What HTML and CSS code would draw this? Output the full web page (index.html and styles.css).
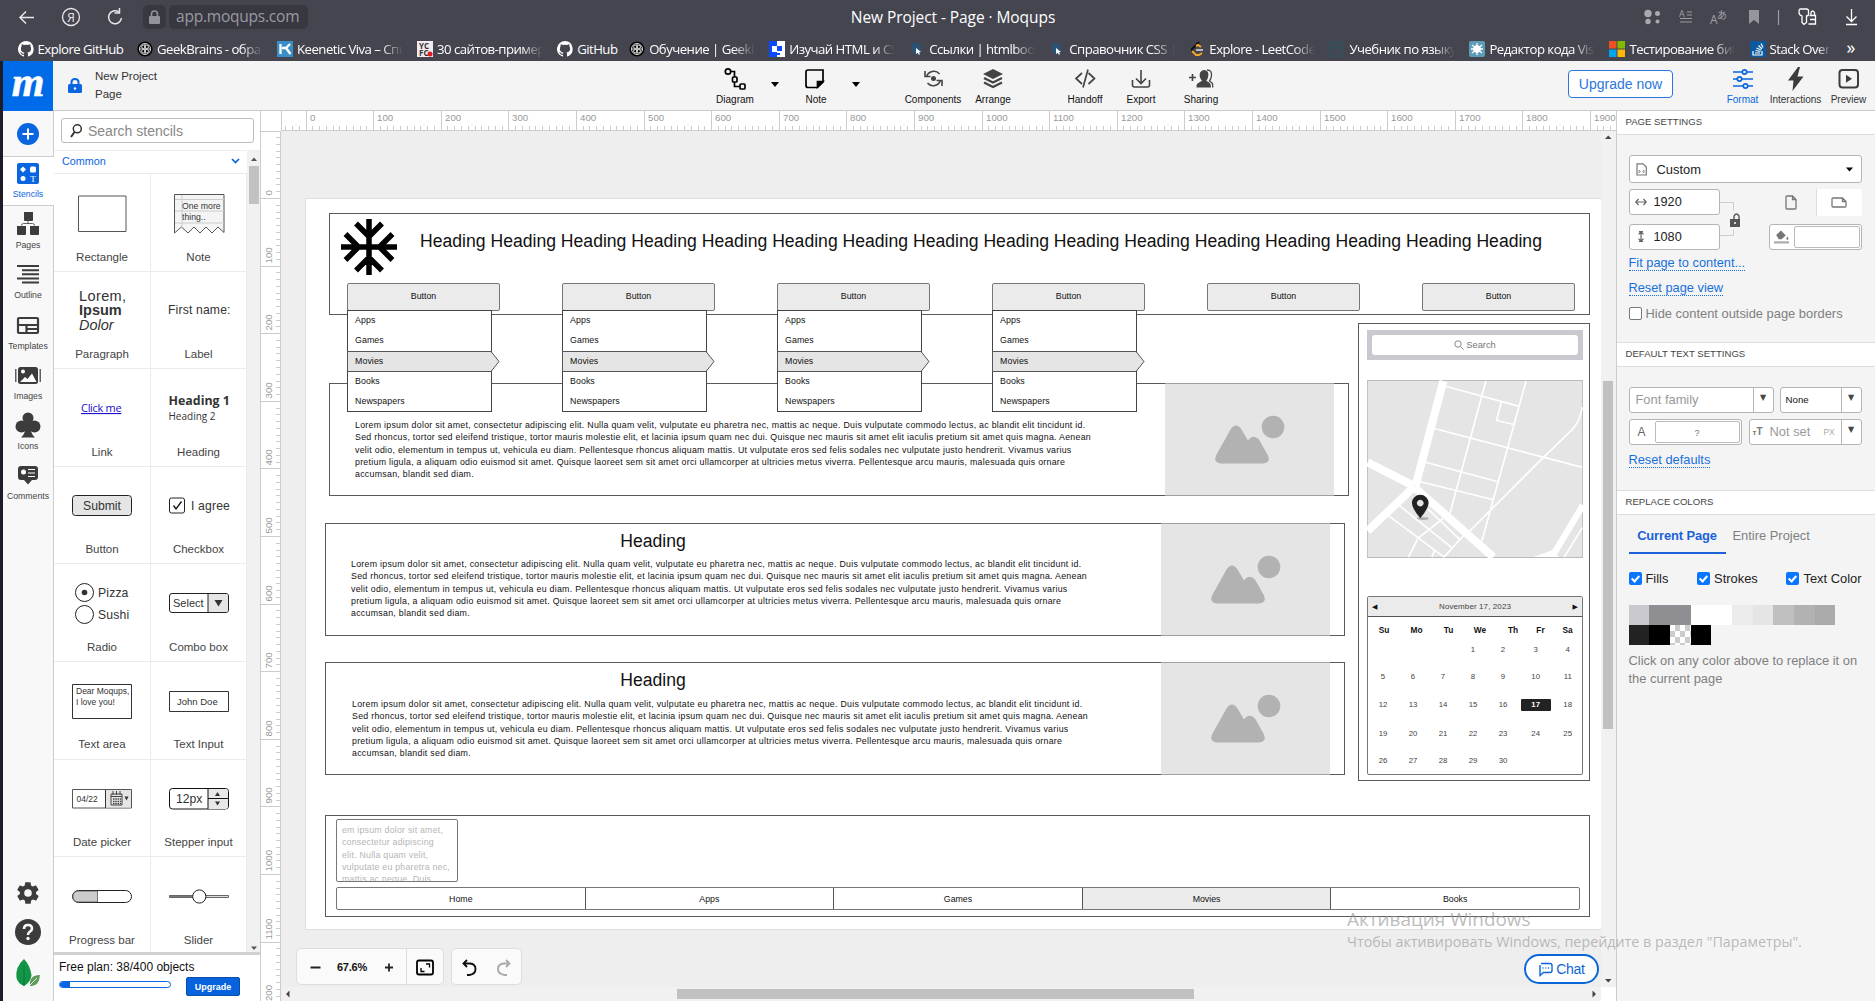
FILE: index.html
```html
<!DOCTYPE html>
<html lang="en">
<head>
<meta charset="utf-8">
<title>New Project - Page · Moqups</title>
<link rel="stylesheet" href="styles.css">
</head>
<body>
<svg class="defs" width="0" height="0">
  <symbol id="gh" viewBox="0 0 16 16"><path fill="#fff" d="M8 0a8 8 0 0 0-2.5 15.6c.4.1.5-.2.5-.4v-1.500c-2.200.500-2.700-1-2.700-1-.4-.9-.9-1.200-.9-1.200-.7-.5.1-.5.1-.5.8.1 1.200.8 1.200.8.7 1.300 1.900.9 2.300.7.1-.5.3-.9.5-1.100-1.800-.2-3.600-.9-3.600-4 0-.9.300-1.600.8-2.100-.1-.2-.4-1 .1-2.100 0 0 .7-.2 2.200.8a7.500 7.500 0 0 1 4 0c1.500-1 2.200-.8 2.200-.8.4 1.100.2 1.900.1 2.100.5.6.8 1.300.8 2.100 0 3.100-1.900 3.700-3.700 3.900.3.300.6.8.6 1.500v2.200c0 .2.100.5.6.4A8 8 0 0 0 8 0z"/></symbol>
  <symbol id="gb" viewBox="0 0 16 16"><circle cx="8" cy="8" r="7.600" fill="#000"/><g fill="none" stroke="#ddd" stroke-width="1"><circle cx="8" cy="8" r="5.500"/><circle cx="6.300" cy="5.800" r="1.700"/><circle cx="9.800" cy="5.800" r="1.700"/><circle cx="6.300" cy="10.200" r="1.700"/><circle cx="9.800" cy="10.200" r="1.700"/><path d="M8 3v10M3 8h10"/></g></symbol>
  <symbol id="hb" viewBox="0 0 16 16"><path fill="#22577f" d="M3 2h3l2-1 1 2 3 1v8l-4 2-5-3z" opacity=".75"/><path fill="#fff" d="M7 7l5 4-2 .3 1 2-1.200.5-1-2L7 13z"/></symbol>
  <symbol id="pic" viewBox="0 0 169 112"><path d="M0 0h169v112H0z" fill="#e5e5e5"/><g fill="#b2b2b2"><circle cx="108" cy="43.500" r="11.300"/><path d="M51 72 65.500 46Q71 38 76.500 46L83 57Q88 50 94 56L103 72Q106 79.500 98 80H56Q48 79.500 51 72z"/></g></symbol>
</svg>

<header class="chrome">
  <div class="chrome-top">
    <svg class="nav" width="130" height="34" viewBox="0 0 130 34" fill="none" stroke="#e8e8ea" stroke-width="1.500"><path d="M34 17.500H20M26 11.500l-6 6 6 6"/><circle cx="71" cy="17" r="8.500" stroke-width="1.300"/><path d="M121.500 18a6.500 6.500 0 1 1-3-6.300M119.500 8v5h-5"/><text x="71" y="21.500" text-anchor="middle" class="ya">Я</text></svg>
    <span class="lock"><svg width="11" height="14" viewBox="0 0 11 14"><rect y="6" width="11" height="8" rx="1" fill="#92929a"/><path d="M2.500 7V4a3 3 0 0 1 6 0v3" fill="none" stroke="#92929a" stroke-width="1.600"/></svg></span>
    <span class="url">app.moqups.com</span>
    <span class="win-title">New Project - Page · Moqups</span>
    <svg class="chrome-icons" width="235" height="34" viewBox="1640 0 235 34"><g fill="#a9a9b0"><circle cx="1648" cy="13.500" r="3.700"/><circle cx="1657.500" cy="13.500" r="2.500"/><circle cx="1648" cy="21.500" r="2.700"/><circle cx="1657.500" cy="21.500" r="2"/><path d="M1749 10h10v14l-5-4-5 4z" opacity=".8"/></g><g stroke="#9b9ba2" stroke-width="1.200"><path d="M1687 12h5M1687 15h5M1680 18.500h12M1680 22h12M1778.500 10v15"/></g><g fill="#a0a0a7"><text x="1679" y="16.500" class="t9">A</text><text x="1710" y="24" class="t12">A</text><text x="1717" y="19" class="t10">あ</text></g><g fill="none" stroke="#fff" stroke-width="1.300"><path d="M1800.500 9h6q2 0 2 2v3q0 2-2 2v6.500l-2.500 2-2-2V16q-3-1-3-3.500V11q0-2 1.500-2z"/><path d="M1809.500 15.500h6v8.500h-7M1811 15v-2.500q1.500-3 3.500 0V15M1810 19.500h5.500"/><path d="M1851.500 9v12M1846.500 16.500l5 5 5-5M1846 24.500h11"/></g></svg>
  </div>
  <nav class="bookmarks">
    <a class="w119"><svg><use href="#gh"/></svg><span>Explore GitHub</span></a>
    <a><svg><use href="#gb"/></svg><span>GeekBrains - образование</span></a>
    <a><svg viewBox="0 0 16 16"><path fill="#3a8ec8" d="M0 0h16v16H0z"/><path d="M3.500 3v10M13 3 9 7H5h4l4.500 6" fill="none" stroke="#fff" stroke-width="2.300"/></svg><span>Keenetic Viva – Список</span></a>
    <a><svg viewBox="0 0 16 16"><path fill="#f4e9ec" d="M0 0h16v16H0z"/><text x="2" y="7.500" class="fav">YC</text><text x="2" y="14.800" class="fav">FC</text><circle cx="13" cy="13" r="2.500" fill="#e02020"/></svg><span>30 сайтов-примеров</span></a>
    <a class="w73"><svg><use href="#gh"/></svg><span>GitHub</span></a>
    <a><svg><use href="#gb"/></svg><span>Обучение | GeekBrains</span></a>
    <a><svg viewBox="0 0 16 16"><path fill="#0b4bff" d="M0 0h8v16H0z"/><path fill="#fff" d="M8 0h8v16H8zM3 5h5v6H3z"/><path fill="#0b4bff" d="M8 5h5v5H8zM8 12h3v2H8z"/></svg><span>Изучай HTML и CSS</span></a>
    <a><svg><use href="#hb"/></svg><span>Ссылки | htmlbook.ru</span></a>
    <a><svg><use href="#hb"/></svg><span>Справочник CSS | htm</span></a>
    <a><svg viewBox="0 0 16 16" fill="none" stroke-width="2"><path stroke="#111" d="M10 1 3 8v3"/><path stroke="#f5a623" d="M3 10l4 4h3l3-2M7 5l2-1 3 2"/><path stroke="#bbb" d="M7 9h7"/></svg><span>Explore - LeetCode</span></a>
    <a><svg viewBox="0 0 16 16"><path fill="none" stroke="#34505f" stroke-width="1.500" d="M1 1h13v14H1zM4 13V4l3.500 4L11 4v9"/></svg><span>Учебник по языку C</span></a>
    <a><svg viewBox="0 0 16 16"><rect width="16" height="16" rx="2" fill="#5d9cb8"/><path stroke="#fff" stroke-width="1.300" d="M8 2v12M3 4l10 8M13 4 3 12M2 8h12"/><circle cx="8" cy="8" r="3.800" fill="#fff"/></svg><span>Редактор кода Visual</span></a>
    <a><svg viewBox="0 0 16 16"><path fill="#f25022" d="M0 0h7.500v7.500H0z"/><path fill="#7fba00" d="M8.500 0H16v7.500H8.500z"/><path fill="#00a4ef" d="M0 8.500h7.500V16H0z"/><path fill="#ffb900" d="M8.500 8.500H16V16H8.500z"/></svg><span>Тестирование библио</span></a>
    <a class="last"><svg viewBox="0 0 16 16"><path fill="#0c5a9e" d="M0 0h16v16H0z"/><path d="M3 10v4h9v-4M5 12h5M5.500 9.500l5 1M6.500 7l4.500 2M8.500 4.500l3.500 3.500M11 2.500l2 4" fill="none" stroke="#fff" stroke-width="1.200"/></svg><span>Stack Overflow</span></a>
    <b>»</b>
  </nav>
</header>

<div class="app">
  <div class="topbar">
    <div class="logo"><svg width="50" height="50" viewBox="0 0 50 50"><text x="25" y="34.500" text-anchor="middle">m</text></svg></div>
    <svg class="plock" width="14" height="15" viewBox="0 0 14 15"><rect y="6" width="14" height="9" rx="1.500" fill="#0a66e0"/><path d="M3.500 7V4a3.500 3 0 0 1 7 0v3" fill="none" stroke="#0a66e0" stroke-width="2"/><circle cx="7" cy="10.500" r="1.200" fill="#fff"/></svg>
    <div class="names"><span>New Project</span><span>Page</span></div>
    <div class="tools">
      <svg width="560" height="49" viewBox="700 61 560 49" fill="none" stroke="#444" stroke-width="1.600"><g stroke="#000" stroke-width="1.700"><circle cx="728" cy="71.500" r="2.700"/><rect x="732.500" y="77" width="4.500" height="5" rx="1"/><rect x="740" y="84" width="5" height="5" rx="1"/><path d="M731 71.500h3.500V77M734.500 82v4.500h5"/><path d="M808 70h15v12l-5.500 5.500H808a2 2 0 0 1-2-2V72a2 2 0 0 1 2-2z"/><path d="M817.500 87v-5.500h5.500z" fill="#000"/></g><path d="M771 82h8l-4 5zM852 82h8l-4 5z" fill="#000" stroke="none"/>
      <circle cx="933.500" cy="78.500" r="2.500" fill="#444" stroke="none"/><path d="M926.500 77a7.500 7.500 0 0 1 13-3M940.500 80a7.500 7.500 0 0 1-13 3M925 71v5.500h5.500M942 86v-5.500h-5.500"/><path d="M993 69l10 5-10 5-10-5z" fill="#444" stroke="none"/><path d="M984 78l9 4.500 9-4.500M984 82.500l9 4.500 9-4.500" stroke-width="2.200"/><path d="M1082 73l-6 5.500 6 5.500M1088.500 73l6 5.500-6 5.500M1088 69.500l-5 18" stroke-width="1.700"/><path d="M1141 70v13M1136 78.500l5 5 5-5M1132.500 80v5q0 2 2 2h13q2 0 2-2v-5"/><g fill="#444" stroke="none"><path d="M1196.500 87.500v-2q0-2 3-3.300l2.500-1.400q-3.300-4-2-8 1.500-3 4.300-2.800 5.500 1 3.800 7-.6 2.600-1.800 3.800l3.200 1.900q1.500 1 1.500 4.800z"/></g><path d="M1207 70q5 0 4.500 5.500-.5 3.500-2 5.500l2.500 2q.8 1 .8 4.500" stroke-width="1.300"/><path d="M1189 77.500h7M1192.500 74v7" stroke-width="1.700"/></svg>
      <span class="l1">Diagram</span><span class="l2">Note</span><span class="l3">Components</span><span class="l4">Arrange</span><span class="l5">Handoff</span><span class="l6">Export</span><span class="l7">Sharing</span>
    </div>
    <button class="upgrade-now">Upgrade now</button>
    <div class="views">
      <div class="v blue"><svg viewBox="0 0 22 24" fill="none" stroke="#0a66e0" stroke-width="1.700"><path d="M1 5h9M15 5h6M1 12h4M10 12h11M1 19h10M16 19h5"/><circle cx="12.500" cy="5" r="2.200"/><circle cx="7.500" cy="12" r="2.200"/><circle cx="13.500" cy="19" r="2.200"/></svg>Format</div>
      <div class="v"><svg viewBox="0 0 22 24"><path d="M13 0 3 13.500h5.500L7.500 24 18.500 9.500h-6L15 0z" fill="#3c3c3c"/></svg>Interactions</div>
      <div class="v"><svg viewBox="0 0 22 24"><rect x="1.500" y="3" width="18.500" height="17.500" rx="3" fill="none" stroke="#3c3c3c" stroke-width="2"/><path d="M8 7.800v8l6-4z" fill="#3c3c3c"/></svg>Preview</div>
    </div>
  </div>

  <div class="body">
    <aside class="rail">
      <div class="add"><svg width="22" height="22" viewBox="0 0 22 22"><circle cx="11" cy="11" r="11" fill="#0a66e0"/><path d="M11 5.500v11M5.500 11h11" stroke="#fff" stroke-width="2"/></svg></div>
      <div class="ri on"><svg viewBox="0 0 26 26"><rect x="2" y="2" width="22" height="21" rx="2" fill="#0a66e0"/><g fill="#fff"><path d="M8 5.500l3 3-3 3-3-3z"/><rect x="15" y="5.500" width="6" height="6" rx="1.500"/><circle cx="8" cy="17.500" r="2.500"/></g><text x="18" y="21" text-anchor="middle">T</text></svg>Stencils</div>
      <div class="ri"><svg viewBox="0 0 26 26" fill="#3c3c3c"><path d="M9 1h9v8q0 1-1 1h-7q-1 0-1-1zM2 15h9v8q0 1-1 1H3q-1 0-1-1zM15 15h9v8q0 1-1 1h-7q-1 0-1-1z"/><path d="M6.500 14.500q0-2 2-2h9q2 0 2 2M13 10v3" fill="none" stroke="#3c3c3c" stroke-width=".8"/></svg>Pages</div>
      <div class="ri"><svg viewBox="0 0 26 26" stroke="#3c3c3c" stroke-width="2"><path d="M2 5h22M7 9.200h17M7 13.300h17M2 17.500h22M7 21.500h17"/></svg>Outline</div>
      <div class="ri"><svg viewBox="0 0 26 26" fill="none" stroke="#3c3c3c" stroke-width="2.200"><rect x="3" y="6" width="20" height="15" rx="1"/><path d="M3 13h20M11.500 13v8M12 17h11"/></svg>Templates</div>
      <div class="ri"><svg viewBox="0 0 26 26" fill="#3c3c3c"><rect x="3" y="5" width="20" height="17" rx="2.500"/><path d="M.8 7v13M25.200 7v13" stroke="#3c3c3c" stroke-width="1.200"/><circle cx="8" cy="9.500" r="2" fill="#fff"/><path d="M5 20l5-5 2.500 2L17 11.500 21.500 20z" fill="#fff"/></svg>Images</div>
      <div class="ri"><svg viewBox="0 0 26 26" fill="#3c3c3c"><circle cx="13" cy="6" r="5.500"/><circle cx="6.500" cy="14.500" r="6"/><circle cx="19.500" cy="14.500" r="6"/><path d="M13 8v12M11 10h4q0 12 5 15.500H6q5-3.500 5-15.500z"/></svg>Icons</div>
      <div class="ri"><svg viewBox="0 0 26 26"><path d="M6 4h14q3 0 3 3v8q0 3-3 3h-3l-4 4.500L9 18H6q-3 0-3-3V7q0-3 3-3z" fill="#3c3c3c"/><circle cx="8.500" cy="10" r="2.500" fill="#fff"/><path d="M13 7.500h7M13 11h7M13 14.500h7" stroke="#fff" stroke-width="1.200"/></svg>Comments</div>
      <div class="rail-end">
        <svg width="26" height="26" viewBox="0 0 24 24"><path fill="#3c3c3c" d="M19.400 13a7.500 7.500 0 0 0 0-2l2.100-1.600a.5.5 0 0 0 .1-.6l-2-3.500a.5.5 0 0 0-.6-.2l-2.500 1a7.300 7.300 0 0 0-1.700-1L14.400 2.400a.5.500 0 0 0-.5-.4h-4a.5.500 0 0 0-.5.400l-.4 2.700a7.700 7.700 0 0 0-1.700 1l-2.500-1a.5.500 0 0 0-.6.200l-2 3.500a.5.500 0 0 0 .1.600L4.500 11a8 8 0 0 0 0 2l-2.100 1.600a.5.500 0 0 0-.1.600l2 3.500c.1.200.4.300.6.200l2.500-1a7.300 7.300 0 0 0 1.700 1l.4 2.700c0 .2.200.4.500.4h4c.2 0 .5-.2.500-.4l.4-2.700a7.700 7.700 0 0 0 1.700-1l2.500 1c.2.100.5 0 .6-.2l2-3.500a.5.500 0 0 0-.1-.6zM12 15.500a3.500 3.500 0 1 1 0-7 3.500 3.500 0 0 1 0 7z"/></svg>
        <svg width="26" height="26" viewBox="0 0 26 26"><circle cx="13" cy="13" r="13" fill="#3c3c3c"/><path d="M9 10q0-4 4-4t4 3.500q0 2-2 3-2 1.200-2 3.500" fill="none" stroke="#f8f8f8" stroke-width="2.600"/><circle cx="13" cy="19.500" r="1.700" fill="#f8f8f8"/></svg>
        <svg width="26" height="30" viewBox="0 0 26 30"><path d="M9 1Q0 9 1.500 20q1 5 7.500 8 7-4 7.500-11Q15 7 9 1z" fill="#149447"/><path d="M9 8v20" stroke="#0b7a38"/><path d="M25 17q-11 0-10 11 9 1 10-11z" fill="#5a9a5a"/><path d="M14 28l8-8" stroke="#fff" stroke-width=".8"/></svg>
      </div>
    </aside>

    <section class="stencils">
      <div class="search"><svg width="12" height="14" viewBox="0 0 12 14" fill="none" stroke="#333"><circle cx="7.300" cy="4.800" r="4" stroke-width="1.500"/><path d="M4.500 8 1 13" stroke-width="2"/></svg>Search stencils</div>
      <div class="list">
        <div class="list-main">
          <div class="common">Common<svg width="9" height="6" viewBox="0 0 9 6"><path d="M1 1l3.500 3.500L8 1" fill="none" stroke="#0a66e0" stroke-width="1.700"/></svg></div>
          <div class="cells">
            <div class="cell"><svg><path d="M24.500 22h47.500v35.500H24.500z" fill="#fff" stroke="#555"/></svg>Rectangle</div>
            <div class="cell"><svg><path d="M23.500 20.500h49.500v38l-6-5.500-6 6-6-6-6 6-6-6-6 6-6.500-6-7 6z" fill="#f4f4f4" stroke="#555"/><path d="M24 25.500h49M24 37h49M24 49h49M31 21v32" stroke="#ccc"/><text x="31" y="35" class="s9">One more</text><text x="31" y="45.500" class="s9">thing..</text></svg>Note</div>
            <div class="cell"><svg><text x="25" y="28.500" class="s14">Lorem,</text><text x="25" y="43" class="s14 bold">Ipsum</text><text x="25" y="57.500" class="s14 it">Dolor</text></svg>Paragraph</div>
            <div class="cell"><svg><text x="17" y="41.500" class="s12 wide">First name:</text></svg>Label</div>
            <div class="cell"><svg><text x="27" y="43" class="os link">Click me</text></svg>Link</div>
            <div class="cell"><svg><text x="17.500" y="35.500" class="os h1">Heading 1</text><text x="17.500" y="51" class="os h2">Heading 2</text></svg>Heading</div>
            <div class="cell"><svg><rect x="18.500" y="28.500" width="59" height="20" rx="3" fill="#e5e5e5" stroke="#222"/><text x="48" y="42.500" text-anchor="middle" class="s12">Submit</text></svg>Button</div>
            <div class="cell"><svg><rect x="18.500" y="31" width="15" height="15" rx="2" fill="#fff" stroke="#222"/><path d="M22.500 38.500l2.500 3.500 5.500-7.500" fill="none" stroke="#111" stroke-width="1.300"/><text x="40" y="43" class="s12 wide">I agree</text></svg>Checkbox</div>
            <div class="cell"><svg><g fill="#fff" stroke="#222"><circle cx="30.500" cy="28.500" r="9"/><circle cx="30.500" cy="50.500" r="9"/></g><circle cx="30.500" cy="28.500" r="2.800" fill="#333"/><text x="44" y="33" class="s12 wide">Pizza</text><text x="44" y="55" class="s12 wide">Sushi</text></svg>Radio</div>
            <div class="cell"><svg><rect x="18.500" y="29.500" width="59" height="19" rx="2.500" fill="#fff" stroke="#222"/><path d="M57 30h18q2 0 2 2v14q0 2-2 2H57z" fill="#e5e5e5"/><path d="M57 30v19" stroke="#222"/><path d="M63.500 36h8l-4 6.500z" fill="#333"/><text x="22" y="43" class="s11">Select</text></svg>Combo box</div>
            <div class="cell"><svg><path d="M18.500 22.500h59v34h-59z" fill="#fff" stroke="#333"/><text x="22" y="32" class="s85">Dear Moqups,</text><text x="22" y="42.500" class="s85">I love you!</text></svg>Text area</div>
            <div class="cell"><svg><path d="M18.500 29.500h59v20h-59z" fill="#fff" stroke="#333"/><text x="26" y="42.500" class="s95">John Doe</text></svg>Text Input</div>
            <div class="cell"><svg><path d="M18.500 29.500h59v18.500h-59z" fill="#fff" stroke="#555"/><path d="M52 30h25v17.500H52z" fill="#e5e5e5"/><path d="M51.500 30v18" stroke="#333"/><path d="M57 34h11v11H57zM57 36.500h11M59 31v4M62.500 31v4M66 31v4" fill="none" stroke="#444"/><path d="M59 39h8M59 41.300h8M59 43.500h8" stroke="#444" stroke-dasharray="1.500 .8" stroke-width="1.300"/><path d="M70.500 36.500h4l-2 4z" fill="#333"/><text x="22.500" y="41.500" class="s85">04/22</text></svg>Date picker</div>
            <div class="cell"><svg><rect x="18.500" y="28.500" width="59" height="20.500" rx="3" fill="#fff" stroke="#111"/><path d="M57 29h17.500q2.500 0 2.500 3v14q0 3-2.500 3H57z" fill="#e8e8e8"/><path d="M57 29v20M57 38.500h20.500" stroke="#111"/><path d="M64 36h5l-2.500-4zM64 41.500h5l-2.500 4z" fill="#333"/><text x="25" y="42.500" class="s12">12px</text></svg>Stepper input</div>
            <div class="cell"><svg><rect x="18.500" y="33.500" width="59" height="12" rx="6" fill="#fff" stroke="#222"/><path d="M43.500 34H25q-6 0-6 5.500t6 5.500h18.500z" fill="#ccc" stroke="#444" stroke-width=".7"/></svg>Progress bar</div>
            <div class="cell"><svg><path d="M18.500 38.500h59v2h-59z" fill="#ddd" stroke="#444" stroke-width=".8"/><path d="M19 39.500h24" stroke="#777"/><circle cx="48.300" cy="39.500" r="6.600" fill="#fff" stroke="#222"/></svg>Slider</div>
          </div>
        </div>
        <div class="list-scroll"><svg width="14" height="802" viewBox="0 0 14 802"><path d="M4 10h6l-3-3.500zM4 795.500h6l-3 3.500z" fill="#555"/><path d="M2 15h10v38H2z" fill="#c1c1c1"/></svg></div>
      </div>
      <footer class="plan"><div class="plan-text">Free plan: 38/400 objects</div><div class="plan-row"><div class="meter"><i></i></div><button>Upgrade</button></div></footer>
    </section>

    <main class="work">
      <svg class="ruler-top" id="rt" width="1335" height="20"></svg>
      <svg class="ruler-left" id="rl" width="20" height="870"></svg>
      <div class="canvas">
        <div class="sheet">
          <div class="box" style="left:23px;top:14px;width:1261px;height:102px"></div>
          <svg class="ob flake" width="56" height="56" viewBox="0 0 56 56" fill="none" stroke="#000" stroke-width="5.500"><path d="M28 0v56M0 28h56M15 4.500l13 13 13-13M15 51.500l13-13 13 13M4.500 15l13 13-13 13M51.500 15l-13 13 13 13"/></svg>
          <div class="ob big">Heading Heading Heading Heading Heading Heading Heading Heading Heading Heading Heading Heading Heading Heading Heading Heading</div>
          <div class="box sec" style="left:23px;top:184px"><svg><use href="#pic"/></svg></div>
          <p class="ob lorem" style="left:49px;top:220px"></p>
          <div class="box sec" style="left:19px;top:324px"><svg><use href="#pic"/></svg><h2>Heading</h2></div>
          <p class="ob lorem" style="left:45px;top:359px"></p>
          <div class="box sec" style="left:19px;top:463px"><svg><use href="#pic"/></svg><h2>Heading</h2></div>
          <p class="ob lorem" style="left:46px;top:499px"></p>
          <div class="ob menubtn" style="left:41px"></div><div class="ob menubtn" style="left:256px"></div><div class="ob menubtn" style="left:471px"></div><div class="ob menubtn" style="left:686px"></div>
          <div class="ob menubtn solo" style="left:901px"></div><div class="ob menubtn solo" style="left:1116px"></div>

          <div class="box side"></div>
          <div class="ob find"><span><svg width="10" height="10" viewBox="0 0 10 10" fill="none" stroke="#888"><circle cx="4" cy="4" r="3.200"/><path d="M6.500 6.500 9.500 9.500"/></svg>Search</span></div>
          <svg class="ob map" width="216" height="178" viewBox="83 240 645 530"><path fill="#e5e5e5" stroke="#bbb" stroke-width="5" d="M83 240h645v530H83z"/><g fill="none" stroke="#fff" stroke-width="5"><path d="M318 258l220 60M438 242L330 640M558 242L426 720M484 305l-14 55 52 12M284 384l442 116M258 485l216 58M243 543l218 54M726 320Q718 365 695 388L600 480 388 692M178 613l158 127M148 645l165 123M265 625l95 90M313 650l-78 62-28 56M313 768l60-66M285 748l-8 20M726 680l-54 88"/><path stroke-width="24" d="M311 242L228 555M85 485l140 72M225 557L85 690M225 560L460 768"/><path stroke-width="19" d="M728 613L642 756"/><path d="M580 768l60-22 15 22z" fill="#fff" stroke="none"/></g><ellipse cx="250" cy="653" rx="18" ry="4" fill="#aaa"/><path fill="#222" fill-rule="evenodd" d="M242 652Q217 622 217 606A25 24 0 0 1 267 606Q267 622 242 652zM242 597a10 10 0 1 0 .1 0z"/></svg>
          <div class="ob cal"><div class="cal-h"><i>◀</i>November 17, 2023<i>▶</i></div>
            <div class="wk"><b>Su</b><b>Mo</b><b>Tu</b><b>We</b><b>Th</b><b>Fr</b><b>Sa</b></div>
            <div class="days" id="days"></div></div>

          <div class="box" style="left:19px;top:616px;width:1265px;height:102px"></div>
          <div class="ob area">em ipsum dolor sit amet,<br>consectetur adipiscing<br>elit. Nulla quam velit,<br>vulputate eu pharetra nec,<br>mattis ac neque. Duis</div>
          <div class="ob tabs5"><span>Home</span><span>Apps</span><span>Games</span><span class="cur">Movies</span><span>Books</span></div>
        </div>
        <div class="zoom"><div class="grp z1"><svg width="146" height="36" viewBox="0 0 146 36" fill="none" stroke="#222" stroke-width="1.800"><path d="M13.500 18.500h10M88 18.500h8M92 14.500v8"/><path d="M109.500 0v36" stroke="#ddd" stroke-width="1"/><rect x="120" y="11.500" width="16" height="14" rx="2" stroke="#000"/><path d="M124 19v3.500h3.500M129 15h3.500v3.500" stroke="#000" stroke-width="1.300"/></svg><span>67.6%</span></div><div class="grp"><svg width="69" height="36" viewBox="0 0 69 36" fill="none" stroke="#111" stroke-width="1.900"><path d="M15 11l-3.500 3.500L15 18M12 14.500h6q5.500 .5 5.500 5.500t-6 6H15"/><path stroke="#aaa" d="M54 11l3.500 3.500L54 18M57 14.500h-5q-6 .5-6 5.500t6.500 6H55"/></svg></div></div>
      </div>
      <div class="vs"><svg width="15" height="856" viewBox="0 1 15 856"><path d="M4 9h6.500l-3.200-3.500zM4 849h6.500l-3.200 3.500z" fill="#444"/><path d="M2 251h10v348H2z" fill="#c1c1c1"/></svg></div>
      <div class="hs"><svg width="1320" height="14" viewBox="281 0 1320 14"><path d="M289.500 3.500v7l-3.500-3.500zM1592.500 3.500v7l3.500-3.500z" fill="#444"/><path d="M677 2h517v10H677z" fill="#c1c1c1"/></svg></div>
      <div class="chat"><svg width="15" height="15" viewBox="0 0 15 15" fill="none" stroke="#0a66d8" stroke-width="1.400"><path d="M3 1.500h9q2 0 2 2v5q0 2-2 2H5.500L2 13.500V3"/><path d="M4.500 6h1M7.300 6h1M10 6h1"/></svg>Chat</div>
    </main>

    <aside class="props">
      <h3>PAGE SETTINGS</h3>
      <div class="pg p1">
        <div class="fld custom"><svg width="11" height="13" viewBox="0 0 11 13" fill="none" stroke="#777"><path d="M1 .8h6L10.300 4v8H1z" stroke-width="1.200"/><path d="M3 7v3l1.500-1.500zM8 7v3L6.500 8.500z" stroke-width=".7"/></svg>Custom<svg class="end" width="7" height="5"><path d="M0 .5h7l-3.500 4z"/></svg></div>
        <div class="dims">
          <div class="dcol"><div class="fld"><svg width="12" height="8" viewBox="0 0 12 8" fill="none" stroke="#666" stroke-width="1.200"><path d="M1 4h10M3.500 1 .8 4l2.700 3M8.500 1l2.700 3-2.700 3"/></svg>1920</div><div class="fld"><svg width="12" height="11" viewBox="0 0 12 11" fill="none" stroke="#666" stroke-width="1.200"><path d="M6 1v9M3.500 3.300 6 .8l2.500 2.500M3.500 7.700 6 10.200l2.500-2.500M4 .6h4M4 10.400h4"/></svg>1080</div></div>
          <svg width="49" height="60" viewBox="0 0 49 60" fill="none" stroke="#ccc"><path d="M0 13.500h13.500v8M0 46.500h13.500v-6"/><path fill="#555" stroke="none" d="M10 30h10v8H10z"/><path d="M14 30v-3q2.500-4 5 0v3" stroke="#555" stroke-width="1.400"/><circle cx="15" cy="34" r="1" fill="#fff" stroke="none"/></svg>
          <div class="rcol"><div class="orient"><span><svg width="12" height="15" viewBox="0 0 12 15" fill="none" stroke="#777" stroke-width="1.300"><path d="M2 1h5.500L11 4.500V13q0 1-1 1H2q-1 0-1-1V2q0-1 1-1zM7.500 1v3.500H11"/></svg></span><span class="sel"><svg width="16" height="11" viewBox="0 0 16 11" fill="none" stroke="#777" stroke-width="1.300"><path d="M2 1h9.500L15 4.500V9q0 1-1 1H2Q1 10 1 9V2q0-1 1-1zM11.500 1v3.500H15"/></svg></span></div>
          <div class="fld paint"><svg width="15" height="15" viewBox="0 0 14 14"><path d="M2 5.500l4.500-4L11 6 7 9.500H4.500z" fill="#777"/><path d="M12.500 7q2 3 0 3t0-3z" fill="#777"/><path d="M0 12.500h14" stroke="#aaa" stroke-width="2"/></svg><i></i></div></div>
        </div>
        <a>Fit page to content...</a><a class="a2">Reset page view</a>
        <label class="hide"><i class="cb"></i>Hide content outside page borders</label>
      </div>
      <h3>DEFAULT TEXT SETTINGS</h3>
      <div class="pg p2">
        <div class="row"><div class="fld ff">Font family<em>▼</em></div><div class="fld nn">None<em>▼</em></div></div>
        <div class="row"><div class="fld aa">A<i>?</i></div><div class="fld ns"><b><small>т</small>T</b>Not set<u>PX</u><em>▼</em></div></div>
        <a>Reset defaults</a>
      </div>
      <h3>REPLACE COLORS</h3>
      <div class="pg p3">
        <div class="tabs"><b>Current Page</b><span>Entire Project</span></div>
        <div class="checks"><label><i class="ck"></i>Fills</label><label><i class="ck"></i>Strokes</label><label><i class="ck"></i>Text Color</label></div>
        <div class="sw" id="sw"></div>
        <p>Click on any color above to replace it on<br>the current page</p>
      </div>
    </aside>
  </div>
</div>
<div class="activate"><strong>Активация Windows</strong><span>Чтобы активировать Windows, перейдите в раздел "Параметры".</span></div>
<script src="main.js"></script>
</body>
</html>
```
FILE: styles.css
```css
* { box-sizing: border-box; }
body { margin: 0; width: 1875px; height: 1001px; overflow: hidden; background: #1d1d27; font-family: "Liberation Sans", Arial, sans-serif; color: #222; }
svg { display: block; flex: none; }
.defs { position: absolute; }
button { font-family: inherit; padding: 0; }

.chrome { height: 61px; background: #45454f; font-family: "Open Sans", "Noto Sans", "Noto Sans CJK JP", sans-serif; color: #fff; }
.chrome-top { height: 34px; display: flex; align-items: center; position: relative; }
.nav { margin-right: 13px; }
.ya { font-size: 12px; fill: #e8e8ea; stroke: none; }
.lock { width: 23px; height: 24px; background: #373840; border-radius: 5px; display: flex; align-items: center; justify-content: center; }
.url { margin-left: 3px; width: 139px; height: 24px; line-height: 23px; background: #373840; border-radius: 5px; padding-left: 7px; font-size: 15.500px; color: #9b9ba2; letter-spacing: -.22px; white-space: nowrap; }
.win-title { position: absolute; left: 0; right: 0; text-align: center; margin-left: 31px; font-size: 15.500px; letter-spacing: -.07px; }
.chrome-icons { margin-left: auto; }
.t9 { font-size: 9px; } .t10 { font-size: 10px; } .t12 { font-size: 12px; }
.bookmarks { height: 27px; padding: 3px 0 0 17.500px; display: flex; align-items: center; font-size: 13.200px; }
.bookmarks a { width: 140.050px; flex: none; display: flex; align-items: center; gap: 4px; }
.bookmarks a.w119 { width: 119.500px; } .bookmarks a.w73 { width: 72px; }
.bookmarks a.w119 span, .bookmarks a.w73 span { mask-image: none; overflow: visible; }
.bookmarks a.last { width: 97px; } .bookmarks a.last span { width: 62px; }
.bookmarks svg { width: 16px; height: 16px; }
.bookmarks span { width: 108px; white-space: nowrap; overflow: hidden; letter-spacing: -.53px; mask-image: linear-gradient(90deg, #000 78%, transparent 98%); }
.bookmarks b { font-weight: 400; font-size: 18px; line-height: 14px; margin-top: -4px; }
.fav { font-size: 8px; font-weight: 700; fill: #333; }

.app { margin-left: 3px; height: 940px; display: flex; flex-direction: column; }
.topbar { height: 50px; flex: none; background: #f4f4f4; border-bottom: 1px solid #ccc; display: flex; align-items: center; }
.logo { width: 50px; height: 50px; background: #006be8; margin-bottom: -1px; }
.logo text { font: italic 700 42px "Liberation Serif", serif; fill: #fff; stroke: #fff; stroke-width: .6px; }
.plock { margin-left: 15px; }
.names { margin-left: 13px; width: 604px; display: flex; flex-direction: column; font-size: 11.500px; line-height: 18px; color: #333; margin-top: -2px; }
.tools { position: relative; width: 560px; height: 49px; margin-left: 1px; }
.tools svg { position: absolute; left: 0; top: 0; }
.tools span { position: absolute; top: 33px; width: 80px; text-align: center; font-size: 10px; line-height: 12px; color: #111; }
.l1 { left: -5px; } .l2 { left: 76px; } .l3 { left: 193px; } .l4 { left: 253px; } .l5 { left: 345px; } .l6 { left: 401px; } .l7 { left: 461px; }
.upgrade-now { margin-left: 308px; width: 105px; height: 28px; background: #fff; border: 1px solid #2b77dd; border-radius: 4px; color: #2b77dd; font-size: 14px; margin-top: -4px; }
.views { margin-left: auto; display: flex; }
.v { width: 53px; display: flex; flex-direction: column; align-items: center; font-size: 10px; line-height: 12px; color: #333; gap: 3px; white-space: nowrap; padding-top: 1px; }
.v svg { width: 22px; height: 24px; }
.blue { color: #0a66e0; }

.body { flex: 1; display: flex; min-height: 0; }
.rail { width: 51px; background: #f8f8f8; border-right: 1px solid #ccc; display: flex; flex-direction: column; flex: none; }
.add { height: 45px; display: flex; align-items: center; justify-content: center; }
.ri { height: 50.200px; display: flex; flex-direction: column; align-items: center; font-size: 8.700px; line-height: 11px; color: #444; padding-top: 5px; gap: 3px; flex: none; }
.ri svg { width: 26px; height: 26px; }
.ri text { font: 9px "Liberation Serif", serif; fill: #fff; }
.ri.on { background: #fff; border: solid #ccc; border-width: 1px 0; margin-right: -1px; color: #0a66e0; padding: 4px 1px 0 0; gap: 2px; }
.rail-end { margin-top: auto; display: flex; flex-direction: column; align-items: center; gap: 13px; padding-bottom: 13.500px; }

.stencils { width: 207px; background: #fff; display: flex; flex-direction: column; flex: none; }
.search { margin: 7px 7px 7px; height: 25px; flex: none; border: 1px solid #bbb; border-radius: 3px; display: flex; align-items: center; gap: 6px; padding-left: 8px; font-size: 14px; color: #888; }
.list { height: 802px; display: flex; border-top: 1px solid #eee; overflow: hidden; flex: none; }
.list-main { width: 193px; }
.list-scroll { width: 14px; background: #f1f1f1; }
.common { height: 23px; border-bottom: 1px solid #eaeaea; display: flex; align-items: center; justify-content: space-between; padding: 0 7px 2px 8px; font-size: 10.800px; color: #0a66e0; }
.cells { display: grid; grid-template-columns: 97px 96px; grid-auto-rows: 97.600px; }
.cell { border: solid #ebebeb; border-width: 0 1px 1px 0; font-size: 11.500px; line-height: 14px; color: #444; text-align: center; }
.cell svg { width: 96px; height: 76px; margin-bottom: -.5px; }
.cell text { fill: #333; }
.s9 { font-size: 8.700px; } .s85 { font-size: 8.500px; } .s95 { font-size: 9.500px; } .s11 { font-size: 11px; } .s12 { font-size: 12.200px; } .s14 { font-size: 14.500px; letter-spacing: .4px; }
.wide { letter-spacing: .15px; }
.bold { font-weight: 700; letter-spacing: 0; } .it { font-style: italic; letter-spacing: 0; }
.os { font-family: "Open Sans", "Noto Sans", sans-serif; }
.cell .link { font-size: 11px; letter-spacing: -.3px; fill: #1a0dcc; text-decoration: underline; }
.h1 { font-size: 12.400px; font-weight: 700; letter-spacing: 0; } .h2 { font-size: 10px; letter-spacing: 0; }
.plan { border-top: 3px solid #d0d0d0; flex: 1; padding: 5px 5px 0; color: #111; }
.plan-text { font-size: 12px; line-height: 14px; }
.plan-row { display: flex; justify-content: space-between; margin-top: 3px; }
.meter { width: 112px; height: 7px; border: 1px solid #0a66e0; border-radius: 4px; overflow: hidden; margin-top: 4px; }
.meter i { display: block; width: 10px; height: 5px; background: #0a66e0; }
.plan button { width: 54px; height: 19px; background: #0763dd; border: 1px solid #0a4faa; border-radius: 2px; color: #fff; font: 700 9px "Liberation Sans", sans-serif; margin-right: 16px; }

.work { width: 1355.500px; margin-left: -1px; flex: none; position: relative; display: grid; grid-template: 20px 856px 14px / 20px 1320px 14.500px; border-left: 1px solid #ccc; background: #fff; }
.ruler-top { grid-area: 1 / 2 / 2 / 4; }
.ruler-left { grid-area: 2 / 1 / 4 / 2; }
.ruler-top line, .ruler-left line { stroke: #ccc; }
.ruler-top text, .ruler-left text { font-size: 9.700px; fill: #999; }
.canvas { grid-area: 2 / 2; background: #eee; position: relative; overflow: hidden; }
.vs { grid-area: 2 / 3; background: #f1f1f1; }
.hs { grid-area: 3 / 2; background: #f1f1f1; }
.sheet { position: absolute; left: 25px; top: 68px; width: 1400px; height: 730px; background: #fff; box-shadow: 0 0 0 1px #ddd; font-size: 8.800px; color: #111; }
.ob, .box { position: absolute; }
.box { border: 1px solid #5a5a5a; }
.flake { left: 35px; top: 20px; }
.big { left: 114px; top: 31px; font-size: 17.600px; line-height: 22px; white-space: nowrap; }
.sec { width: 1020px; height: 113px; }
.sec svg { width: 169px; height: 113px; position: absolute; right: 14px; top: -1px; }
.sec h2 { margin: 6px 364px 0 0; font: 400 17.600px/22px "Liberation Sans", sans-serif; text-align: center; }
.lorem { margin: 0; line-height: 12.350px; white-space: nowrap; letter-spacing: .275px; }
.menubtn { top: 84px; width: 153px; }
.menubtn .b { height: 28px; border: 1px solid #777; border-radius: 2px; background: #ebebeb; text-align: center; line-height: 25px; }
.menubtn .m { width: 145px; height: 102px; border: 1px solid #444; background: #fff; margin-top: -1px; line-height: 18.500px; padding-left: 7px; position: relative; letter-spacing: .08px; }
.menubtn .m svg { position: absolute; left: -1px; top: 39px; }
.menubtn .m div { position: relative; height: 20px; }
.menubtn .m div:nth-of-type(n+3) { top: 1px; }
.side { left: 1052px; top: 124px; width: 232px; height: 458px; }
.find { left: 1061px; top: 131px; width: 216px; height: 30px; background: #c9c9cf; padding: 5px; }
.find span { height: 20px; border-radius: 3px; background: #fff; display: flex; align-items: center; justify-content: center; gap: 2px; color: #777; font-size: 9.300px; }
.map { left: 1061px; top: 181px; }
.cal { left: 1061px; top: 397px; width: 216px; height: 179px; border: 1px solid #777; border-radius: 2px; font-size: 7.800px; color: #444; }
.cal-h { height: 20px; background: #ebebeb; border-bottom: 1px solid #555; display: flex; justify-content: space-between; align-items: center; padding: 0 4px; font-size: 8px; letter-spacing: .1px; }
.cal-h i { font: 7px "DejaVu Sans", sans-serif; color: #111; }
.wk { display: grid; grid-template-columns: 32px 33px 31px 32px 34px 21px 33px; text-align: center; line-height: 26px; height: 19px; font-size: 8.300px; color: #111; }
.days { display: grid; grid-template: 26px 28px 29px 28px 27px / repeat(5, 30px) 35.400px 28.600px; text-align: center; align-items: center; }
.days b { background: #222; color: #fff; width: 30px; height: 12px; line-height: 12px; border-radius: 1px; justify-self: center; }
.area { left: 30px; top: 620px; width: 122px; height: 63px; border: 1px solid #777; border-radius: 2px; overflow: hidden; color: #b5b5b5; line-height: 12.300px; padding: 4px 0 0 5px; white-space: nowrap; letter-spacing: .22px; }
.tabs5 { left: 30px; top: 688px; width: 1244px; height: 23px; border: 1px solid #777; border-radius: 2px; display: flex; line-height: 22px; text-align: center; }
.tabs5 span { flex: 1; border-left: 1px solid #555; }
.tabs5 span:first-child { border: 0; }
.cur { background: #ebebeb; }
.zoom { position: absolute; left: 15px; top: 817px; display: flex; gap: 7px; }
.grp { position: relative; background: #fafafa; border: 1px solid #ddd; border-radius: 5px; height: 37px; }
.z1 span { position: absolute; left: 34px; width: 42px; top: 12px; text-align: center; font: 700 11px/13px "Liberation Sans", sans-serif; letter-spacing: -.2px; color: #111; }
.chat { position: absolute; left: 1263px; top: 843px; width: 75px; height: 30px; border: 2px solid #0a66d8; border-radius: 15px; background: #fff; display: flex; align-items: center; justify-content: center; gap: 3px; color: #0a66d8; font-size: 14px; letter-spacing: -.3px; }

.props { flex: 1; background: #f4f4f4; border-left: 1px solid #ccc; font-size: 12.900px; }
.props h3 { margin: 0; height: 24px; background: #fff; border-bottom: 1px solid #ddd; font-weight: 400; font-size: 9.600px; line-height: 22px; padding-left: 9px; color: #444; }
.props h3 ~ h3 { border-top: 1px solid #ddd; height: 25px; }
.pg { padding: 20px 14px 0 12px; }
.p1 { height: 207px; } .p2 { height: 122.500px; }
.fld { background: #fff; border: 1px solid #b5b5b5; border-radius: 3px; display: flex; align-items: center; height: 25.500px; }
.custom { height: 28px; padding: 0 8px 0 6px; gap: 10px; }
.custom .end { margin-left: auto; }
.dims { display: flex; margin-top: 6px; }
.dcol { width: 91px; display: flex; flex-direction: column; gap: 9.500px; }
.dcol .fld { padding-left: 5px; gap: 7px; font-size: 12.700px; }
.rcol { width: 93px; display: flex; flex-direction: column; gap: 8px; }
.orient { height: 27px; display: flex; }
.orient span { width: 47px; display: flex; align-items: center; justify-content: center; padding-right: 3px; }
.orient .sel { width: 46px; background: #fff; border-left: 1px solid #ddd; padding: 0; }
.paint { padding: 0 1px 0 4px; gap: 5px; }
.fld i { flex: 1; height: 21.500px; border: 1px solid #bbb; border-radius: 2px; }
.pg a { display: table; color: #1670dd; line-height: 14px; margin-top: 6px; font-size: 12.800px; border-bottom: 1px dotted #1670dd; height: 14px; }
.pg a.a2 { margin-top: 10px; }
.hide { display: flex; align-items: center; gap: 4px; margin-top: 11px; color: #808080; white-space: nowrap; line-height: 14px; }
.cb { width: 13px; height: 13px; border: 1px solid #777; border-radius: 2px; background: #fff; flex: none; }
.row { display: flex; justify-content: space-between; margin-bottom: 6.500px; }
.row .fld { position: relative; }
.ff { width: 145px; padding-left: 6px; color: #999; } .nn { width: 82px; padding-left: 5px; font-size: 9.700px; color: #111; }
.aa { width: 113px; padding: 0 1px 0 8px; gap: 9px; color: #666; font-size: 12px; } .aa i { font-style: normal; font-size: 9px; text-align: center; line-height: 22px; color: #777; }
.ns { width: 113px; padding-left: 3px; color: #999; gap: 7px; } .ns b { font-size: 10px; color: #777; } .ns small { font-size: 8px; } .ns u { font-size: 8.500px; text-decoration: none; margin-left: 6px; color: #aaa; }
.row em { position: absolute; right: 0; top: 0; width: 20px; height: 23.500px; border-left: 1px solid #b5b5b5; font: 8px/20px "DejaVu Sans", sans-serif; text-align: center; color: #444; }
.p2 a { margin-top: 8px; }
.p3 { padding-top: 6px; }
.tabs { display: flex; line-height: 29px; color: #808080; }
.tabs b { width: 97px; text-align: center; color: #1b62d8; border-bottom: 2px solid #1b62d8; height: 33px; margin-right: 7px; letter-spacing: -.1px; }
.checks { display: flex; justify-content: space-between; margin-top: 18px; }
.checks label { display: flex; align-items: center; gap: 4px; line-height: 14px; }
.ck { width: 13px; height: 13px; border-radius: 2px; background: #0a75ff; position: relative; }
.ck::after { content: ""; position: absolute; left: 4px; top: 1.500px; width: 5px; height: 8px; box-sizing: border-box; border: solid #fff; border-width: 0 2px 2px 0; transform: rotate(42deg); }
.sw { width: 208px; display: grid; grid-template-columns: repeat(10, 20.700px); grid-auto-rows: 20.400px; margin-top: 19px; }
.chk { background: conic-gradient(#ccc 25%, #fff 0 50%, #ccc 0 75%, #fff 0) 0 0 / 10px 12px; }
.p3 p { margin: 7px 0; line-height: 18px; color: #808080; white-space: nowrap; }

.activate { position: absolute; left: 1347px; top: 906px; display: flex; flex-direction: column; font-family: "Open Sans", "Noto Sans", sans-serif; color: rgba(150, 150, 150, .65); white-space: nowrap; }
.activate strong { font-weight: 400; font-size: 18.900px; line-height: 26px; }
.activate span { font-size: 14.300px; line-height: 20px; }
```
FILE: main.js
```js
const NS = 'http://www.w3.org/2000/svg';
const el = (parent, tag, attrs, text) => {
  const n = document.createElementNS(NS, tag);
  for (const k in attrs) n.setAttribute(k, attrs[k]);
  if (text !== undefined) n.textContent = text;
  parent.appendChild(n);
};
const step = 6.76;
const rt = document.getElementById('rt');
const rl = document.getElementById('rl');
el(rt, 'line', { x1: 0, x2: 1335, y1: 19.5, y2: 19.5 });
el(rt, 'line', { x1: 0.5, x2: 0.5, y1: 0, y2: 20 });
for (let i = -3; i <= 194; i++) {
  const x = Math.floor(25 + i * step) + 0.5;
  el(rt, 'line', { x1: x, x2: x, y1: i % 10 ? 15 : 0, y2: 20 });
  if (i % 10 === 0) el(rt, 'text', { x: x + 3.5, y: 9.5 }, i * 10);
}
el(rl, 'line', { x1: 19.5, x2: 19.5, y1: 0, y2: 871 });
el(rl, 'line', { x1: 0, x2: 20, y1: 0.5, y2: 0.5 });
for (let i = -9; i <= 120; i++) {
  const y = Math.floor(67.5 + i * step) + 0.5;
  el(rl, 'line', { y1: y, y2: y, x1: i % 10 ? 15 : 0, x2: 20 });
  if (i % 10 === 0) el(rl, 'text', { transform: `translate(10.5 ${y - 3}) rotate(-90)` }, i * 10);
}

document.querySelectorAll('.menubtn').forEach(n => {
  n.innerHTML = '<div class="b">Button</div>' + (n.classList.contains('solo') ? '' :
    '<div class="m"><svg width="154" height="23"><path d="M.5 1.500H144L152 11.500 144 21.500H.5z" fill="#e5e5e5" stroke="#555"/></svg>' +
    '<div>Apps</div><div>Games</div><div>Movies</div><div>Books</div><div>Newspapers</div></div>');
});

const lorem = 'Lorem ipsum dolor sit amet, consectetur adipiscing elit. Nulla quam velit, vulputate eu pharetra nec, mattis ac neque. Duis vulputate commodo lectus, ac blandit elit tincidunt id.<br>Sed rhoncus, tortor sed eleifend tristique, tortor mauris molestie elit, et lacinia ipsum quam nec dui. Quisque nec mauris sit amet elit iaculis pretium sit amet quis magna. Aenean<br>velit odio, elementum in tempus ut, vehicula eu diam. Pellentesque rhoncus aliquam mattis. Ut vulputate eros sed felis sodales nec vulputate justo hendrerit. Vivamus varius<br>pretium ligula, a aliquam odio euismod sit amet. Quisque laoreet sem sit amet orci ullamcorper at ultricies metus viverra. Pellentesque arcu mauris, malesuada quis ornare<br>accumsan, blandit sed diam.';
document.querySelectorAll('.lorem').forEach(n => { n.innerHTML = lorem; });

let days = '<span></span><span></span><span></span>';
for (let d = 1; d <= 30; d++) days += d === 17 ? '<b>17</b>' : `<span>${d}</span>`;
document.getElementById('days').innerHTML = days;

const colors = ['#c9c9cf', '#8e8e93', '#8e8e93', '#fff', '#fff', '#ebebeb', '#e5e5e5', '#c0c0c0', '#b2b2b2', '#aaa', '#222', '#000', '', '#000'];
document.getElementById('sw').innerHTML = colors.map(c => c ? `<i style="background:${c}"></i>` : '<i class="chk"></i>').join('');
```
